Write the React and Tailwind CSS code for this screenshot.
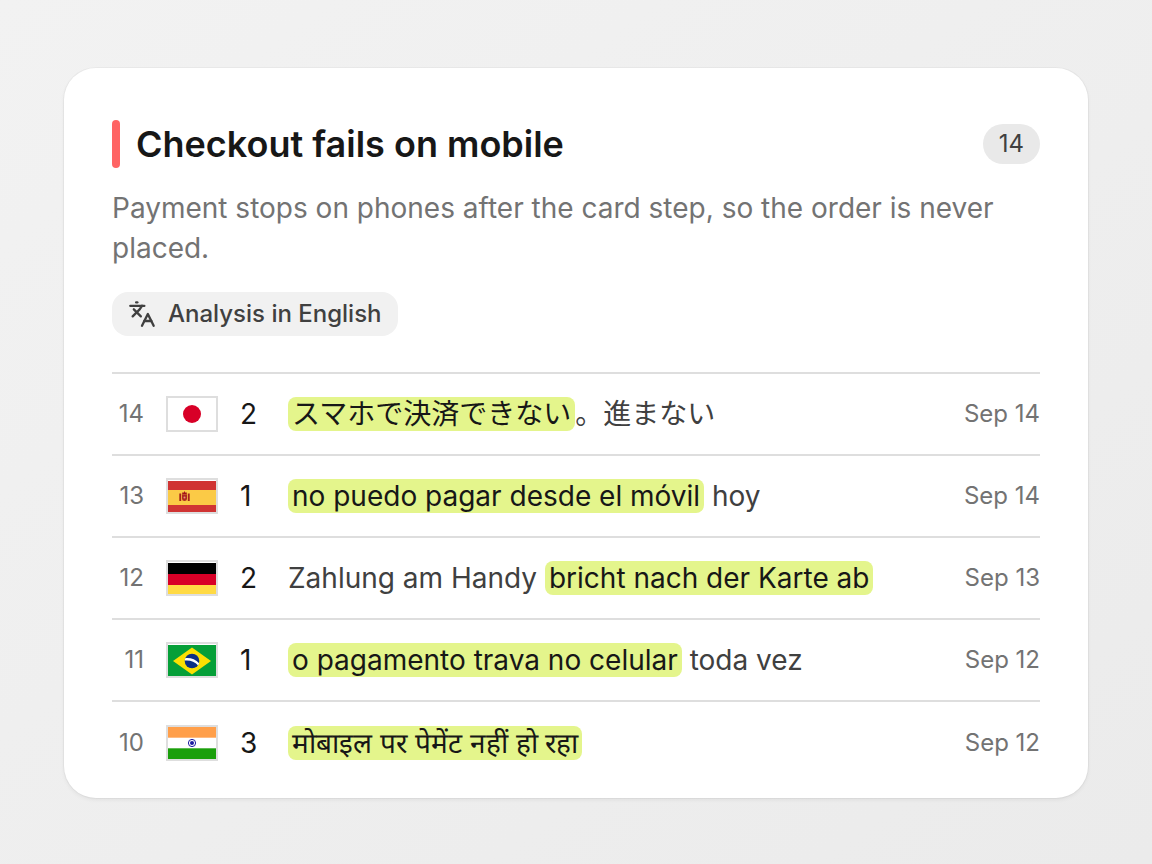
import { Languages } from "lucide-react"

const Flag = ({ label, children }) => (
    <svg role="img" aria-label={label} viewBox="0 0 48 32" className="box-border block h-9 w-13 border-2 border-[#dedede] bg-white">
        {children}
    </svg>
)

const Japan = () => (
    <Flag label="Japan">
        <circle cx="24" cy="16" r="9" fill="#d80027" />
    </Flag>
)

const Spain = () => (
    <Flag label="Spain">
        <rect y="1" width="48" height="31" fill="#d03433" />
        <rect y="10" width="48" height="15" fill="#fbca46" />
        <path d="M11.3 13.6h1.900v7.400h-1.900zM19.800 13.600h1.900v7.400h-1.900z" fill="#a8221c" />
        <path d="M14 14.2h5v4.500q0 2.400-2.500 2.400T14 18.700z" fill="#b02a20" />
        <path d="M14.200 12.400h4.600v1.600h-4.600zM16 11.600h1v1h-1z" fill="#a41517" />
        <circle cx="16.500" cy="17.500" r="1" fill="#e39a80" />
    </Flag>
)

const Germany = () => (
    <Flag label="Germany">
        <rect y="1" width="48" height="11" fill="#000" />
        <rect y="12" width="48" height="11" fill="#d80027" />
        <rect y="23" width="48" height="9" fill="#ffda44" />
    </Flag>
)

const Brazil = () => (
    <Flag label="Brazil">
        <rect y="1" width="48" height="31" fill="#059f38" />
        <path d="M24 3.500 43 17 24 30.500 5 17z" fill="#fbe002" />
        <circle cx="24" cy="17" r="7.300" fill="#0b2f84" />
        <path d="M17.200 14.200c5-.7 10.400 1 13.900 5l-.9 2.300c-3.600-3.800-8-5.500-13.500-4.900z" fill="#fff" />
    </Flag>
)

const India = () => (
    <Flag label="India">
        <rect width="48" height="10.700" fill="#ff9f4a" />
        <rect y="21.300" width="48" height="10.700" fill="#1a9f0b" />
        <circle cx="24" cy="16" r="3.600" fill="#fff" stroke="#1a1aa0" strokeWidth="1" />
        <circle cx="24" cy="16" r="2" fill="#1a1aa0" />
    </Flag>
)

const mentions = [
    { id: 14, flag: Japan, count: 2, lang: 'ja', mark: 'スマホで決済できない', after: '。進まない', date: 'Sep 14' },
    { id: 13, flag: Spain, count: 1, lang: 'es', mark: 'no puedo pagar desde el móvil', after: ' hoy', date: 'Sep 14' },
    { id: 12, flag: Germany, count: 2, lang: 'de', before: 'Zahlung am Handy ', mark: 'bricht nach der Karte ab', date: 'Sep 13' },
    { id: 11, flag: Brazil, count: 1, lang: 'pt', mark: 'o pagamento trava no celular', after: ' toda vez', date: 'Sep 12' },
    { id: 10, flag: India, count: 3, lang: 'hi', mark: 'मोबाइल पर पेमेंट नहीं हो रहा', date: 'Sep 12' },
]

export default function App() {
  return (
    <main className="flex min-h-screen flex-col justify-center bg-linear-to-br from-[#f2f2f2] to-[#ebebeb] px-16 pt-[66px] pb-16 font-['Inter','Noto_Sans_CJK_JP',sans-serif] [font-optical-sizing:none]">
        <section className="rounded-4xl bg-white px-12 pt-13 pb-[15px] shadow-[0_0_0_1px_rgba(0,0,0,0.03),0_2px_4px_rgba(0,0,0,0.06)]">
            <header className="flex items-center gap-4">
                <span className="h-12 w-2 rounded-sm bg-[#ff6464]"></span>
                <h1 className="grow text-4xl font-semibold text-[#171717]">Checkout fails on mobile</h1>
                <span className="rounded-full bg-[#e9e9e9] px-4 text-2xl leading-10 text-[#404040]">14</span>
            </header>
            <p className="mt-5 text-[28px] leading-10 text-[#737373]">Payment stops on phones after the card step, so the order is never placed.</p>
            <div className="mt-6 flex h-11 w-fit items-center gap-3 rounded-2xl bg-[#f1f1f1] px-4 text-2xl font-medium text-[#404040]">
                <Languages size={28} strokeWidth={2} aria-hidden="true" />
                Analysis in English
            </div>
            <table className="mt-9 w-full text-[28px]">
                <tbody>
                    {mentions.map(({ id, flag: Icon, count, lang, before, mark, after, date }) => (
                        <tr key={id} className="h-[82px] border-t-2 border-[#dedede]">
                            <td className="w-8 p-0 text-right text-2xl text-[#737373]">{id}</td>
                            <td className="w-24 pl-[22px]"><Icon /></td>
                            <td className="w-12 text-[#171717]">{count}</td>
                            <td lang={lang} className="text-[#404040]">
                                {before}
                                <mark className="rounded-lg bg-[#e4f58c] px-1 text-[#171717]">{mark}</mark>
                                {after}
                            </td>
                            <td className="text-right text-2xl whitespace-nowrap text-[#737373]">{date}</td>
                        </tr>
                    ))}
                </tbody>
            </table>
        </section>
    </main>
  )
}
